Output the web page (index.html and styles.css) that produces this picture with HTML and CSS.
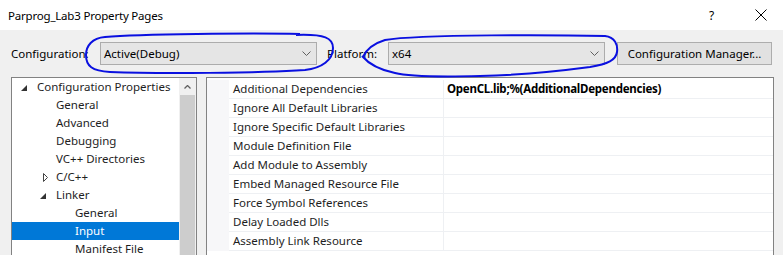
FILE: index.html
```html
<!DOCTYPE html>
<html lang="en">
<head>
  <meta charset="UTF-8">
  <title>Parprog_Lab3 Property Pages</title>
  <link rel="stylesheet" href="styles.css">
</head>
<body>
  <div class="titlebar">
    <span class="title">Parprog_Lab3 Property Pages</span>
    <span class="help">?</span>
    <svg class="close" width="12" height="12" viewBox="0 0 12 12">
      <path d="M0.5 0.5 L11.5 11.5 M11.5 0.5 L0.5 11.5" stroke="#000" stroke-width="1" fill="none"/>
    </svg>
  </div>

  <div class="dialog">
    <!-- configuration / platform selectors -->
    <div class="toolbar">
      <span class="field-label config-label">Configuration:</span>
      <div class="combo">
        <span>Active(Debug)</span>
        <svg class="chevron" width="9" height="5" viewBox="0 0 9 5"><path d="M0.5 0.5 L4.5 4.5 L8.5 0.5" stroke="#606060" fill="none"/></svg>
      </div>
      <span class="field-label platform-label">Platform:</span>
      <div class="combo">
        <span>x64</span>
        <svg class="chevron" width="9" height="5" viewBox="0 0 9 5"><path d="M0.5 0.5 L4.5 4.5 L8.5 0.5" stroke="#606060" fill="none"/></svg>
      </div>
      <button class="manager-btn">Configuration Manager...</button>
    </div>

    <div class="panels">
      <!-- left tree -->
      <div class="tree">
        <ul class="tree-list">
          <li class="tree-item level-0"><span class="arrow"><svg width="6" height="6" viewBox="0 0 6 6"><polygon points="6,0 6,6 0,6" fill="#333"/></svg></span>Configuration Properties</li>
          <li class="tree-item level-1"><span class="arrow"></span>General</li>
          <li class="tree-item level-1"><span class="arrow"></span>Advanced</li>
          <li class="tree-item level-1"><span class="arrow"></span>Debugging</li>
          <li class="tree-item level-1"><span class="arrow"></span>VC++ Directories</li>
          <li class="tree-item level-1"><span class="arrow collapsed"><svg width="5" height="9" viewBox="0 0 5 9"><polygon points="0.5,0.5 4.5,4.5 0.5,8.5" fill="none" stroke="#444"/></svg></span>C/C++</li>
          <li class="tree-item level-1"><span class="arrow"><svg width="6" height="6" viewBox="0 0 6 6"><polygon points="6,0 6,6 0,6" fill="#333"/></svg></span>Linker</li>
          <li class="tree-item level-2"><span class="arrow"></span>General</li>
          <li class="tree-item level-2 selected"><span class="arrow"></span>Input</li>
          <li class="tree-item level-2"><span class="arrow"></span>Manifest File</li>
        </ul>
        <div class="scrollbar">
          <div class="scroll-arrow">
            <svg width="7" height="4" viewBox="0 0 7 4"><path d="M0.5 3.5 L3.5 0.5 L6.5 3.5" stroke="#606060" stroke-width="1.3" fill="none"/></svg>
          </div>
          <div class="scroll-thumb"></div>
        </div>
      </div>

      <!-- property grid -->
      <div class="grid">
        <div class="grid-row"><span class="margin"></span><span class="name">Additional Dependencies</span><span class="value">OpenCL.lib;%(AdditionalDependencies)</span></div>
        <div class="grid-row"><span class="margin"></span><span class="name">Ignore All Default Libraries</span><span class="value"></span></div>
        <div class="grid-row"><span class="margin"></span><span class="name">Ignore Specific Default Libraries</span><span class="value"></span></div>
        <div class="grid-row"><span class="margin"></span><span class="name">Module Definition File</span><span class="value"></span></div>
        <div class="grid-row"><span class="margin"></span><span class="name">Add Module to Assembly</span><span class="value"></span></div>
        <div class="grid-row"><span class="margin"></span><span class="name">Embed Managed Resource File</span><span class="value"></span></div>
        <div class="grid-row"><span class="margin"></span><span class="name">Force Symbol References</span><span class="value"></span></div>
        <div class="grid-row"><span class="margin"></span><span class="name">Delay Loaded Dlls</span><span class="value"></span></div>
        <div class="grid-row"><span class="margin"></span><span class="name">Assembly Link Resource</span><span class="value"></span></div>
      </div>
    </div>
  </div>

  <!-- hand-drawn marks over the screenshot -->
  <svg class="scribbles" width="783" height="255" viewBox="0 0 783 255">
    <path d="M300 34 C250 33, 140 34, 105 37 C92 38, 86 46, 86 55 C86 66, 92 71, 110 72 C160 74, 260 73, 305 70 C322 68, 333 60, 333 48 C333 38, 325 34, 296 35" fill="none" stroke="#0a10e0" stroke-width="2"/>
    <path d="M363 57 C366 50, 372 44, 385 40 C420 34, 560 35, 605 36 C615 37, 618 45, 617 52 C616 60, 608 64, 590 67 C560 71, 520 75, 480 76 C440 77, 410 77, 395 73 C380 70, 368 63, 362 56" fill="none" stroke="#0a10e0" stroke-width="2"/>
  </svg>
</body>
</html>
```

FILE: styles.css
```css
body {
  margin: 0;
  width: 783px;
  height: 255px;
  overflow: hidden;
  position: relative;
  font-family: "Noto Sans", sans-serif;
  font-size: 11.5px;
  color: #000;
  background-color: #f0f0f0;
}

.titlebar {
  height: 30px;
  background-color: #fff;
  display: flex;
  align-items: center;
  padding-left: 8px;
}

.title {
  flex: 1;
  letter-spacing: -0.2px;
}

.help {
  width: 12px;
  margin-right: 34px;
  font-size: 12px;
}

.close {
  margin-right: 16px;
}

.dialog {
  padding: 12px 0 0 11px;
}

.toolbar {
  display: flex;
  align-items: center;
  height: 23px;
}

.field-label {
  white-space: nowrap;
}

.config-label {
  width: 89px;
}

.platform-label {
  width: 61px;
  margin-left: 10px;
}

.combo {
  box-sizing: border-box;
  width: 217px;
  height: 23px;
  border: 1px solid #acacac;
  background-color: #e5e5e5;
  display: flex;
  align-items: center;
  justify-content: space-between;
  padding: 0 5px 0 3px;
}

.manager-btn {
  box-sizing: border-box;
  width: 155px;
  height: 23px;
  margin-left: 12px;
  border: 1px solid #adadad;
  background-color: #e1e1e1;
  font-family: inherit;
  font-size: 11.5px;
  color: #000;
  padding: 0;
}

.panels {
  display: flex;
  gap: 9px;
  margin-top: 12px;
}

.tree {
  width: 186px;
  height: 200px;
  box-sizing: border-box;
  border: 1px solid #828282;
  background-color: #fff;
  display: flex;
}

.tree-list {
  list-style: none;
  margin: 0;
  padding: 0;
  flex: 1;
}

.tree-item {
  height: 18px;
  line-height: 18px;
  display: flex;
  align-items: center;
  color: #1e1e1e;
  white-space: nowrap;
}

.tree-item.level-0 { padding-left: 8px; }
.tree-item.level-1 { padding-left: 27px; }
.tree-item.level-2 { padding-left: 46px; }

.tree-item.selected {
  background-color: #0078d7;
  color: #fff;
}

.arrow {
  width: 17px;
  height: 18px;
  display: flex;
  align-items: center;
  padding-left: 1px;
  box-sizing: border-box;
}

.arrow svg {
  margin-top: 2px;
}

.arrow.collapsed {
  padding-left: 4px;
}

.arrow.collapsed svg {
  margin-top: 0;
}

.scrollbar {
  width: 17px;
  background-color: #f0f0f0;
  display: flex;
  flex-direction: column;
}

.scroll-arrow {
  height: 17px;
  display: flex;
  align-items: center;
  justify-content: center;
}

.scroll-thumb {
  flex: 1;
  margin: 0 1px;
  background-color: #cdcdcd;
}

.grid {
  width: 568px;
  height: 200px;
  box-sizing: border-box;
  border: 1px solid #828282;
  background-color: #fff;
  padding-top: 2px;
}

.grid-row {
  display: grid;
  grid-template-columns: 22px 214px 1fr;
  height: 19px;
}

.margin {
  background-color: #f7f7f9;
}

.name,
.value {
  border-bottom: 1px solid #eef0f3;
  line-height: 18px;
  white-space: nowrap;
  color: #1e1e1e;
}

.name {
  padding-left: 4px;
}

.value {
  border-left: 1px solid #eef0f3;
  padding-left: 3px;
  font-weight: bold;
  letter-spacing: -0.25px;
  color: #000;
}

.scribbles {
  position: absolute;
  top: 0;
  left: 0;
  pointer-events: none;
}
```
